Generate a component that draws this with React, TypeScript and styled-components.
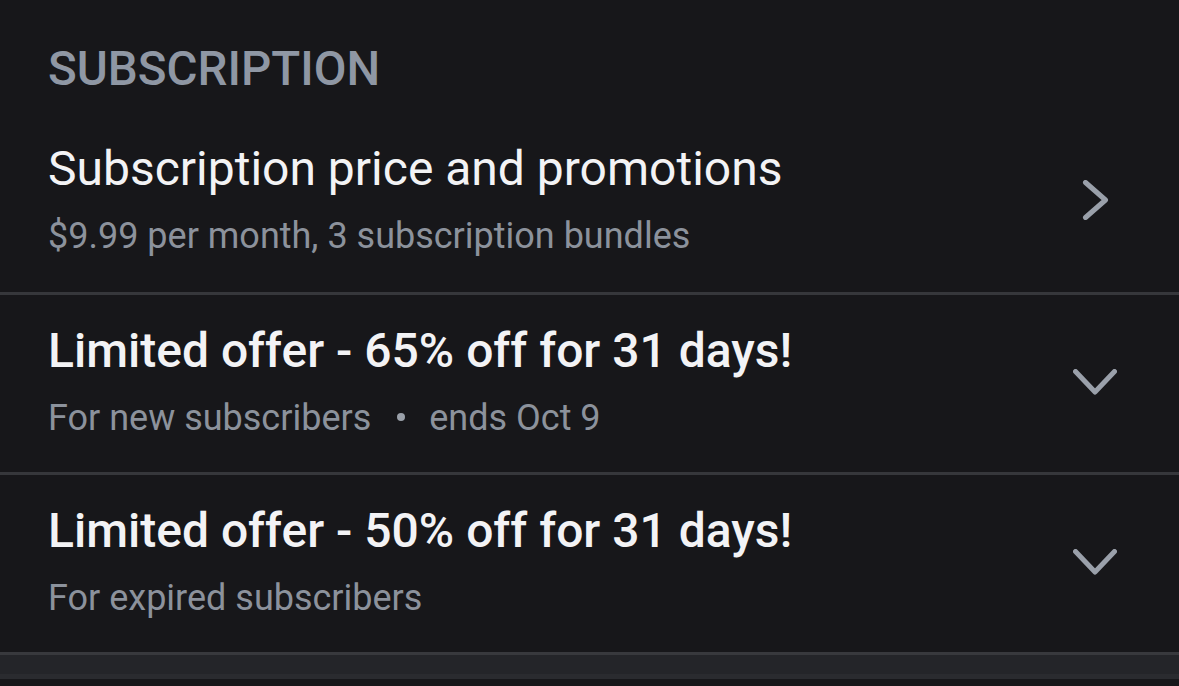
import styled, { createGlobalStyle } from "styled-components"

const GlobalStyle = createGlobalStyle`
  html, body {
    margin: 0;
    padding: 0;
    background: #17171a;
  }
  body {
    font-family: Roboto, "Noto Sans", "Liberation Sans", sans-serif;
    -webkit-font-smoothing: antialiased;
  }
`

const Page = styled.div`
  width: 1179px;
  height: 686px;
  overflow: hidden;
  background: #17171a;
  display: flex;
  flex-direction: column;
`

const SectionHeader = styled.h2`
  margin: 0;
  padding: 41px 48px 0;
  font-size: 47.5px;
  line-height: 56px;
  font-weight: 500;
  color: #8f97a4;
`

const Row = styled.div<{ $first?: boolean }>`
  display: flex;
  align-items: center;
  padding: ${(p) => (p.$first ? "44px 62px 34px 48px" : "28px 62px 32px 48px")};
  border-top: ${(p) => (p.$first ? "none" : "3px solid #36373b")};
  cursor: pointer;
`

const TextCol = styled.div`
  flex: 1;
  display: flex;
  flex-direction: column;
  gap: 17px;
`

const Title = styled.div<{ $strong?: boolean }>`
  font-size: 48px;
  line-height: 56px;
  font-weight: ${(p) => (p.$strong ? 500 : 400)};
  color: #f3f3f5;
`

const Subtitle = styled.div`
  font-size: 36px;
  line-height: 44px;
  color: #8c929c;
`

const Dot = styled.span`
  display: inline-block;
  width: 8px;
  height: 8px;
  border-radius: 50%;
  background: #9aa0a9;
  margin: 0 24px 0 26px;
  vertical-align: 9px;
`

const IconSlot = styled.div`
  width: 44px;
  display: flex;
  justify-content: center;
  color: #9aa0aa;
`

const Footer = styled.div`
  border-top: 3px solid #38393d;
  height: 19px;
  background: #242529;
  border-bottom: 5px solid #2a2b2f;
`

function ChevronRight() {
  return (
    <svg width={44} height={40} viewBox="0 0 44 40" fill="none">
      <polyline
        points="12.5,2.5 32.5,20 12.5,37.5"
        stroke="currentColor"
        strokeWidth={5}
        strokeLinecap="round"
        strokeLinejoin="round"
      />
    </svg>
  )
}

function ChevronDown() {
  return (
    <svg width={44} height={26} viewBox="0 0 44 26" fill="none">
      <polyline
        points="2.5,2.5 22,23 41.5,2.5"
        stroke="currentColor"
        strokeWidth={5}
        strokeLinecap="round"
        strokeLinejoin="round"
      />
    </svg>
  )
}

export default function App() {
  return (
    <Page>
      <GlobalStyle />
      <SectionHeader>SUBSCRIPTION</SectionHeader>

      <Row $first>
        <TextCol>
          <Title>Subscription price and promotions</Title>
          <Subtitle>$9.99 per month, 3 subscription bundles</Subtitle>
        </TextCol>
        <IconSlot>
          <ChevronRight />
        </IconSlot>
      </Row>

      <Row>
        <TextCol>
          <Title $strong>Limited offer - 65% off for 31 days!</Title>
          <Subtitle>
            For new subscribers
            <Dot />
            ends Oct 9
          </Subtitle>
        </TextCol>
        <IconSlot>
          <ChevronDown />
        </IconSlot>
      </Row>

      <Row>
        <TextCol>
          <Title $strong>Limited offer - 50% off for 31 days!</Title>
          <Subtitle>For expired subscribers</Subtitle>
        </TextCol>
        <IconSlot>
          <ChevronDown />
        </IconSlot>
      </Row>

      <Footer />
    </Page>
  )
}
